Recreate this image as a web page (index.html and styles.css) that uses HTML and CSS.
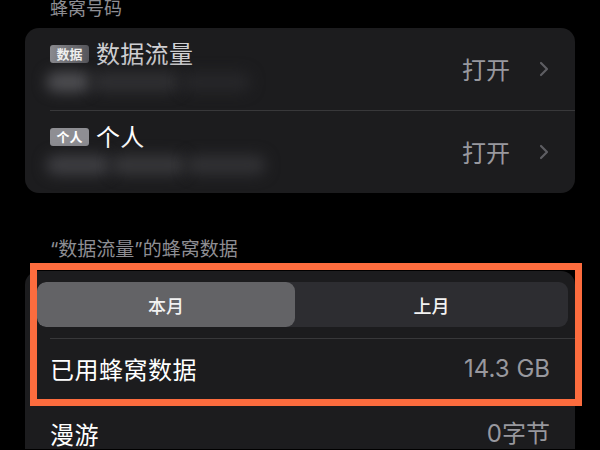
FILE: index.html
```html
<!DOCTYPE html>
<html lang="zh-CN">
<head>
    <meta charset="UTF-8">
    <meta name="viewport" content="width=device-width, initial-scale=1.0">
    <title>蜂窝网络</title>
    <link rel="stylesheet" href="styles.css">
</head>
<body>
    <div class="page">
        <div class="section-title first">蜂窝号码</div>

        <div class="group">
            <div class="line-row">
                <div class="line-info">
                    <div class="line-name dim">
                        <span class="badge badge-data">数据</span>
                        <span>数据流量</span>
                    </div>
                    <div class="blur-sub">
                        <i class="b1"></i><i class="b2"></i><i class="b3"></i>
                    </div>
                </div>
                <span class="value">打开</span>
                <svg class="chevron" viewBox="0 0 10 16" width="10" height="16">
                    <path d="M2 2 L8 8 L2 14" fill="none" stroke="#5d5d62" stroke-width="2.2" stroke-linecap="round" stroke-linejoin="round"/>
                </svg>
            </div>
            <div class="line-row">
                <div class="line-info">
                    <div class="line-name">
                        <span class="badge">个人</span>
                        <span>个人</span>
                    </div>
                    <div class="blur-sub">
                        <i class="b4"></i><i class="b5"></i><i class="b6"></i>
                    </div>
                </div>
                <span class="value">打开</span>
                <svg class="chevron" viewBox="0 0 10 16" width="10" height="16">
                    <path d="M2 2 L8 8 L2 14" fill="none" stroke="#5d5d62" stroke-width="2.2" stroke-linecap="round" stroke-linejoin="round"/>
                </svg>
            </div>
        </div>

        <div class="section-title quoted">“数据流量”的蜂窝数据</div>

        <div class="group usage">
            <div class="segmented">
                <div class="seg active">本月</div>
                <div class="seg">上月</div>
            </div>
            <div class="row">
                <span class="label">已用蜂窝数据</span>
                <span class="value">14.3 GB</span>
            </div>
            <div class="row">
                <span class="label">漫游</span>
                <span class="value">0字节</span>
            </div>
        </div>
    </div>

    <!-- annotation box drawn over the usage card -->
    <div class="highlight"></div>
</body>
</html>
```

FILE: styles.css
```css
body {
    margin: 0;
    background-color: #000;
    font-family: "Noto Sans CJK SC", "Noto Sans", sans-serif;
    color: #fff;
    height: 450px;
    overflow: hidden;
    position: relative;
}

.page {
    padding: 0 25px;
}

.section-title {
    font-size: 18px;
    line-height: 24px;
    color: #8e8e93;
    padding-left: 25px;
    margin: 45px 0 9px;
}

.section-title.first {
    line-height: 15px;
    margin: 0 0 13px;
}

.section-title.quoted {
    font-family: "Inter", "Noto Sans CJK SC", sans-serif;
    font-size: 19px;
}

.group {
    background-color: #1c1c1e;
    border-radius: 14px;
    overflow: hidden;
}

/* sim lines */
.line-row {
    display: flex;
    align-items: center;
    height: 82px;
    margin-left: 25px;
    padding-right: 26px;
}

.line-row + .line-row {
    border-top: 1px solid #38383a;
}

.line-info {
    flex: 1;
    align-self: flex-start;
    padding-top: 11px;
}

.line-name {
    display: flex;
    align-items: center;
    gap: 7px;
    font-size: 24px;
    line-height: 28px;
    letter-spacing: 0.3px;
}

.line-name.dim {
    color: #cfcfd2;
}

.badge {
    display: inline-block;
    width: 39px;
    height: 18px;
    line-height: 18px;
    border-radius: 3px;
    background-color: #8e8e93;
    color: #fff;
    font-size: 13px;
    font-weight: 700;
    letter-spacing: 0;
    text-align: center;
    margin-top: 2px;
}

.badge-data {
    background: linear-gradient(to right, #8a8a8f, #55555a);
    color: #f0f0f0;
}

.blur-sub {
    display: flex;
    height: 24px;
    margin-top: 5px;
    margin-left: -4px;
}

.blur-sub i {
    display: block;
    height: 20px;
    border-radius: 10px;
    filter: blur(7px);
}

.blur-sub .b1 { width: 45px; background-color: #4e4e52; }
.blur-sub .b2 { width: 90px; background-color: #2f2f32; }
.blur-sub .b3 { width: 70px; background-color: #262629; }
.blur-sub .b4 { width: 65px; background-color: #3e3e42; }
.blur-sub .b5 { width: 75px; background-color: #37373a; }
.blur-sub .b6 { width: 80px; background-color: #313134; }

.value {
    font-family: "Inter", "Noto Sans CJK SC", sans-serif;
    font-size: 24px;
    line-height: 26px;
    color: #98989e;
}

.line-row .value {
    font-family: "Noto Sans CJK SC", sans-serif;
}

.chevron {
    margin-left: 29px;
}

/* usage card */
.usage {
    height: 178px;
    border-bottom-left-radius: 0;
    border-bottom-right-radius: 0;
}

.segmented {
    display: flex;
    height: 45px;
    margin: 11px 7px 11px 12px;
    background-color: #2d2d31;
    border-radius: 9px;
    overflow: hidden;
}

.seg {
    flex: 1;
    display: flex;
    align-items: center;
    justify-content: center;
    font-size: 18px;
    font-weight: 500;
    color: #f2f2f2;
}

.seg.active {
    flex: 0 0 258px;
    background-color: #636366;
    border-radius: 9px;
}

.row {
    display: flex;
    justify-content: space-between;
    align-items: center;
    height: 66px;
    box-sizing: border-box;
    padding-bottom: 6px;
    margin-left: 25px;
    padding-right: 25px;
    border-top: 1px solid #38383a;
}

.row + .row {
    height: 46px;
    padding-bottom: 0;
    padding-top: 12px;
}

.label {
    font-size: 24px;
    line-height: 26px;
    letter-spacing: 0.5px;
    color: #fff;
}

.highlight {
    position: absolute;
    top: 263px;
    left: 30px;
    width: 552px;
    height: 143px;
    border: 7px solid #fc6c3e;
    box-sizing: border-box;
}
```
